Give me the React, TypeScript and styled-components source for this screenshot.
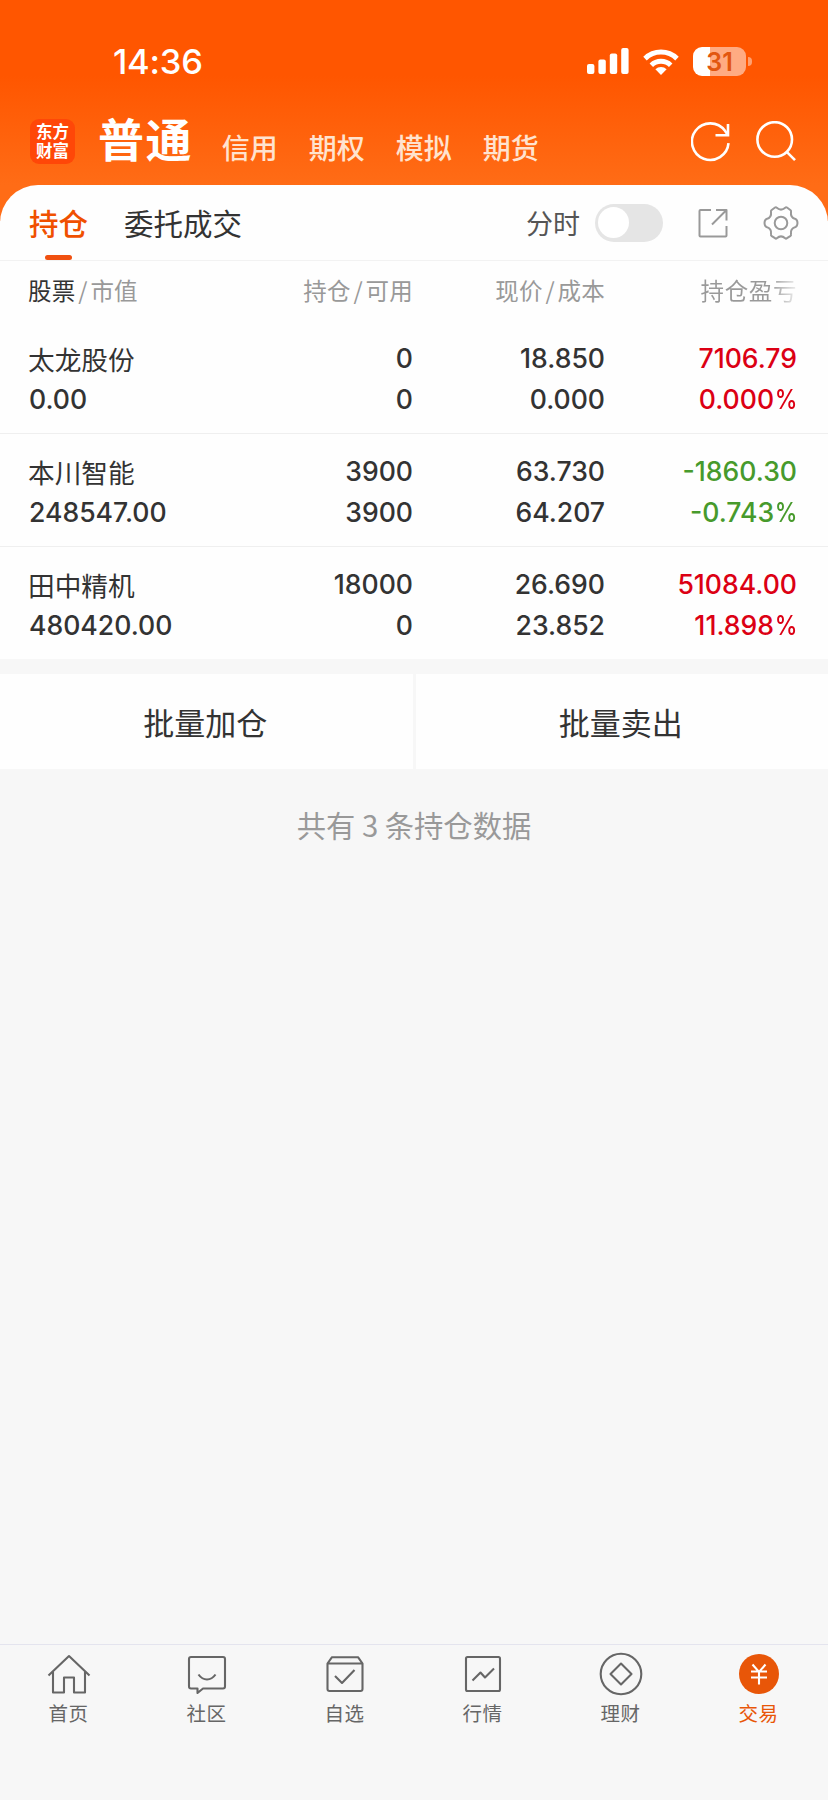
import React from 'react';
import styled, { createGlobalStyle, css } from 'styled-components';

const CJK = `'Noto Sans CJK SC', 'Noto Sans', sans-serif`;
const NUM = `Inter, 'Noto Sans CJK SC', sans-serif`;

const GlobalStyle = createGlobalStyle`
  * { box-sizing: border-box; }
  body { margin: 0; background: #f7f7f7; font-family: ${CJK}; color: #333; }
  button { font: inherit; color: inherit; border: 0; padding: 0; background: none; }
`;

const Screen = styled.div`
  width: 828px;
  height: 1800px;
  display: flex;
  flex-direction: column;
  background: #f7f7f7;
  overflow: hidden;
`;

const Hero = styled.header`
  height: 221px;
  flex: none;
  background: linear-gradient(#ff5600 0, #ff5600 76px, #ff6c16 185px);
`;

const StatusBar = styled.div`
  height: 106px;
  padding: 16px 82px 0 113px;
  display: flex;
  align-items: center;
  color: #fff;
`;

const Clock = styled.time`
  font: 550 34.5px/40px ${NUM};
  letter-spacing: -0.2px;
  padding-top: 1px;
  margin-right: auto;
`;

const SystemIcons = styled.div`
  display: flex;
  align-items: center;
  gap: 14px;
`;

const Battery = styled.div`
  position: relative;
  width: 53px;
  height: 29px;
  border-radius: 9px;
  background: linear-gradient(90deg, #fff 17px, #ffab82 17px);
  color: #e2560f;
  font: 600 25px/30px ${NUM};
  text-align: center;
  &::after {
    content: '';
    position: absolute;
    right: -6px;
    top: 10px;
    width: 4px;
    height: 9px;
    border-radius: 0 4px 4px 0;
    background: #ffa070;
  }
`;

const AccountBar = styled.div`
  height: 79px;
  padding: 0 32px 0 30px;
  display: flex;
  align-items: center;
`;

const Brand = styled.div`
  width: 45px;
  height: 45px;
  margin: -8px 23px 0 0;
  padding-top: 3px;
  border-radius: 9px;
  background: #ff4708;
  color: #fff;
  font-size: 16.5px;
  font-weight: 700;
  line-height: 19px;
  text-align: center;
`;

const AccountTabs = styled.nav`
  display: flex;
  align-items: baseline;
  gap: 31px;
  margin: -9px auto 0 0;
`;

const AccountTab = styled.a<{ $active?: boolean }>`
  font-size: 28px;
  font-weight: 500;
  line-height: 60px;
  color: #ffe3cf;
  position: relative;
  top: 2px;
  ${p => p.$active && css`
    top: 0;
    color: #fff;
    font-size: 46px;
    font-weight: 700;
    letter-spacing: 1.4px;
    margin-right: -2px;
  `}
`;

const HeroActions = styled.div`
  display: flex;
  gap: 25px;
  margin-top: -8px;
`;

const Card = styled.main`
  flex: none;
  height: 474px;
  margin-top: -36px;
  background: #fefefe;
  border-radius: 38px 38px 0 0;
`;

const TabBar = styled.div`
  height: 76px;
  padding: 0 29px;
  display: flex;
  align-items: center;
  border-bottom: 1px solid #f2f2f2;
`;

const Tab = styled.a<{ $active?: boolean }>`
  position: relative;
  font-size: 29.5px;
  line-height: 74px;
  height: 76px;
  margin-right: 36px;
  color: ${p => (p.$active ? '#f05000' : '#333')};
  font-weight: ${p => (p.$active ? 500 : 400)};
  ${p => p.$active && css`
    &::after {
      content: '';
      position: absolute;
      left: 16px;
      bottom: 1px;
      width: 27px;
      height: 5px;
      border-radius: 3px;
      background: #f05010;
    }
  `}
`;

const Tools = styled.div`
  display: flex;
  align-items: center;
  margin-left: auto;
`;

const ToolLabel = styled.span`
  font-size: 27px;
  color: #555;
  margin-right: 15px;
`;

const Toggle = styled.button`
  width: 68px;
  height: 38px;
  padding: 0 3px;
  border-radius: 19px;
  background: #e5e5e5;
  display: flex;
  align-items: center;
  margin-right: 35px;
  &::before {
    content: '';
    width: 31px;
    height: 31px;
    border-radius: 50%;
    background: #fff;
  }
`;

const ToolIcons = styled.div`
  display: flex;
  align-items: center;
  gap: 35px;
`;

const columns = css`
  display: grid;
  grid-template-columns: 215px 170px 192px 192px;
  padding: 0 31px 0 28px;
`;

const ColumnHeads = styled.div`
  ${columns}
  height: 59px;
  align-items: center;
  font-size: 23.5px;
  letter-spacing: 0.2px;
  line-height: 34px;
  padding-bottom: 2px;
  color: #999;
`;

const Head = styled.div<{ $fade?: boolean }>`
  text-align: right;
  white-space: nowrap;
  &:first-child { text-align: left; }
  ${p => p.$fade && css`
    background: linear-gradient(90deg, #999 165px, #eee 192px);
    background-clip: text;
    color: transparent;
    letter-spacing: 0.6px;
  `}
`;

const HeadStrong = styled.span`
  color: #333;
`;

const Slash = styled.span`
  display: inline-block;
  width: 15px;
  text-align: center;
`;

const Holding = styled.div`
  ${columns}
  height: 113px;
  padding-top: 18px;
  row-gap: 1px;
  align-content: start;
  & + & {
    border-top: 1px solid #efefef;
    padding-top: 17px;
  }
`;

const StockName = styled.div`
  font-size: 26.7px;
  line-height: 41px;
  height: 40px;
`;

const Figure = styled.div<{ $tone?: 'up' | 'down'; $left?: boolean }>`
  font: 550 26.6px/40px ${NUM};
  text-align: ${p => (p.$left ? 'left' : 'right')};
  padding-left: ${p => (p.$left ? '1px' : '0')};
  color: ${p => (p.$tone === 'up' ? '#dc0014' : p.$tone === 'down' ? '#479a2c' : '#333')};
`;

const Percent = styled.span`
  display: inline-block;
  transform: scaleX(0.86);
  transform-origin: right;
  margin-left: -3.5px;
`;

const BatchActions = styled.div`
  display: grid;
  grid-template-columns: 1fr 1fr;
  gap: 3px;
  margin-top: 15px;
  height: 95px;
  flex: none;
`;

const BatchButton = styled.button`
  background: #fefefe;
  font-size: 31px;
  line-height: 94px;
  padding-right: 2px;
`;

const Summary = styled.p`
  margin: 33px 0 0;
  text-align: center;
  font-size: 29.3px;
  line-height: 44px;
  color: #999;
`;

const BottomNav = styled.nav`
  margin-top: auto;
  height: 156px;
  border-top: 1px solid #e4e4ee;
  display: grid;
  grid-template-columns: repeat(6, 1fr);
`;

const NavItem = styled.a<{ $active?: boolean }>`
  display: flex;
  flex-direction: column;
  align-items: center;
  padding-top: 7px;
  font-size: 19.5px;
  letter-spacing: 0.4px;
  line-height: 30px;
  text-indent: -1px;
  color: ${p => (p.$active ? '#e85608' : '#666')};
  svg { margin-bottom: 2px; }
`;

const Line = ({ size, w = 2.1, children }: { size: number; w?: number; children: React.ReactNode }) => (
  <svg width={size} height={size} viewBox={`0 0 ${size} ${size}`} fill="none" stroke="currentColor" strokeWidth={w} strokeLinejoin="round">
    {children}
  </svg>
);

const Signal = () => (
  <svg width="42" height="26" viewBox="0 0 42 26" fill="#fff">
    <rect x="0" y="16" width="7.4" height="10" rx="2" />
    <rect x="11.4" y="11.5" width="7.4" height="14.5" rx="2" />
    <rect x="22.8" y="5.5" width="7.4" height="20.5" rx="2" />
    <rect x="34.2" y="0" width="7.4" height="26" rx="2" />
  </svg>
);

const Wifi = () => (
  <svg width="36" height="27" viewBox="0 0 36 27" fill="none" stroke="#fff" strokeWidth="5">
    <path d="M2 10.6a23 23 0 0 1 32 0" />
    <path d="M8.3 17.2a14 14 0 0 1 19.4 0" />
    <path d="M12.4 21.3a8 8 0 0 1 11.2 0L18 27z" fill="#fff" stroke="none" />
  </svg>
);

const Refresh = () => (
  <svg width="40" height="42" viewBox="0 0 40 42" fill="none" stroke="#fff" strokeWidth="2.6">
    <path d="M37.500 22.2A18.3 18.3 0 1 1 34 9.8L36.500 13.500" />
    <path d="M37 3v11.2H24.5" />
  </svg>
);

const Search = () => (
  <svg width="40" height="42" viewBox="0 0 40 42" fill="none" stroke="#fff" strokeWidth="2.6">
    <circle cx="18.7" cy="18.5" r="17.3" />
    <path d="M30.700 30.900l8.3 8.3" />
  </svg>
);

const Share = () => (
  <svg width="30" height="30" viewBox="0 0 30 30" fill="none" stroke="#999" strokeWidth="2" strokeLinejoin="round">
    <path d="M13 2H2.5Q1.5 2 1.5 3V27.5Q1.5 28.5 2.5 28.5H27.5Q28.5 28.5 28.5 27.5V18" />
    <path d="M18 2H28.5V12.5M28 2.5L14 16.5" />
  </svg>
);

const Gear = () => (
  <svg width="36" height="36" viewBox="0 0 36 36" fill="none" stroke="#999" strokeWidth="2" strokeLinejoin="round">
    <circle cx="18" cy="18" r="6.3" />
    <path d="M8.4 5.2L12 2.5Q13 1.8 13.8 2.8Q18 6.4 22.2 2.8Q23 1.8 24 2.5L27.6 5.2Q28.4 5.9 28 6.8Q27.2 12.6 32.5 14Q34.3 14.7 34.5 18Q34.3 21.3 32.5 22Q27.2 23.4 28 29.2Q28.4 30.1 27.6 30.8L24 33.2Q23 34 22.2 33.2Q18 29.6 13.8 33.2Q13 34 12 33.2L8.4 30.8Q7.6 30.1 8 29.2Q8.8 23.4 3.5 22Q1.7 21.3 1.5 18Q1.7 14.7 3.5 14Q8.8 12.6 8 6.8Q7.6 5.9 8.4 5.2Z" />
  </svg>
);

const navItems: { label: string; icon: React.ReactNode; active?: boolean }[] = [
  { label: '首页', icon: (
    <Line size={44}>
      <path d="M1.5 23.5L22 4l20.500 19.5" />
      <path d="M6 19.500V40.500H17V25.500H27V40.500H38V19.500" />
    </Line>
  ) },
  { label: '社区', icon: (
    <Line size={44}>
      <path d="M6 5H38Q40 5 40 7V34.500Q40 36.500 38 36.500H18L12.500 41V36.500H6Q4 36.500 4 34.500V7Q4 5 6 5Z" />
      <path d="M13.500 22.500Q17 27.500 22 27.500T30.500 22.500" />
    </Line>
  ) },
  { label: '自选', icon: (
    <Line size={44}>
      <path d="M4.500 11.500L9 5.200H35L39.500 11.500V37Q39.500 39 37.500 39H6.500Q4.500 39 4.500 37ZM4.500 11.500H39.500" />
      <path d="M12 24L19 31L31.500 18" />
    </Line>
  ) },
  { label: '行情', icon: (
    <Line size={44}>
      <rect x="5" y="5" width="34" height="34" rx="1.500" />
      <path d="M11.500 28.500L19.500 20.500L24 25.500L33 16.500" />
    </Line>
  ) },
  { label: '理财', icon: (
    <Line size={44}>
      <circle cx="22" cy="22" r="20.300" />
      <path d="M22 11.500L32.500 22L22 32.500L11.500 22Z" />
    </Line>
  ) },
  { label: '交易', active: true, icon: (
    <Line size={44}>
      <circle cx="22" cy="22" r="20" fill="currentColor" stroke="none" />
      <path d="M15.500 12.500L22 20L28.500 12.500M22 20V32.500M14 19.500H30M14 25.500H30" stroke="#fff" strokeLinejoin="miter" />
    </Line>
  ) },
];

const holdings: { name: string; value: string; held: string; usable: string; price: string; cost: string; profit: string; rate: string; tone: 'up' | 'down' }[] = [
  { name: '太龙股份', value: '0.00', held: '0', usable: '0', price: '18.850', cost: '0.000', profit: '7106.79', rate: '0.000', tone: 'up' },
  { name: '本川智能', value: '248547.00', held: '3900', usable: '3900', price: '63.730', cost: '64.207', profit: '-1860.30', rate: '-0.743', tone: 'down' },
  { name: '田中精机', value: '480420.00', held: '18000', usable: '0', price: '26.690', cost: '23.852', profit: '51084.00', rate: '11.898', tone: 'up' },
];

export default function App() {
  return (
    <Screen>
      <GlobalStyle />
      <Hero>
        <StatusBar>
          <Clock>14:36</Clock>
          <SystemIcons>
            <Signal />
            <Wifi />
            <Battery>31</Battery>
          </SystemIcons>
        </StatusBar>
        <AccountBar>
          <Brand>东方<br />财富</Brand>
          <AccountTabs>
            <AccountTab $active>普通</AccountTab>
            <AccountTab>信用</AccountTab>
            <AccountTab>期权</AccountTab>
            <AccountTab>模拟</AccountTab>
            <AccountTab>期货</AccountTab>
          </AccountTabs>
          <HeroActions>
            <Refresh />
            <Search />
          </HeroActions>
        </AccountBar>
      </Hero>
      <Card>
        <TabBar>
          <Tab $active>持仓</Tab>
          <Tab>委托成交</Tab>
          <Tools>
            <ToolLabel>分时</ToolLabel>
            <Toggle aria-label="分时" />
            <ToolIcons>
              <Share />
              <Gear />
            </ToolIcons>
          </Tools>
        </TabBar>
        <ColumnHeads>
          <Head><HeadStrong>股票</HeadStrong><Slash>/</Slash>市值</Head>
          <Head>持仓<Slash>/</Slash>可用</Head>
          <Head>现价<Slash>/</Slash>成本</Head>
          <Head $fade>持仓盈亏</Head>
        </ColumnHeads>
        {holdings.map(h => (
          <Holding key={h.name}>
            <StockName>{h.name}</StockName>
            <Figure>{h.held}</Figure>
            <Figure>{h.price}</Figure>
            <Figure $tone={h.tone}>{h.profit}</Figure>
            <Figure $left>{h.value}</Figure>
            <Figure>{h.usable}</Figure>
            <Figure>{h.cost}</Figure>
            <Figure $tone={h.tone}>{h.rate}<Percent>%</Percent></Figure>
          </Holding>
        ))}
      </Card>
      <BatchActions>
        <BatchButton>批量加仓</BatchButton>
        <BatchButton>批量卖出</BatchButton>
      </BatchActions>
      <Summary>共有 3 条持仓数据</Summary>
      <BottomNav>
        {navItems.map(n => (
          <NavItem key={n.label} $active={n.active}>
            {n.icon}
            {n.label}
          </NavItem>
        ))}
      </BottomNav>
    </Screen>
  );
}
